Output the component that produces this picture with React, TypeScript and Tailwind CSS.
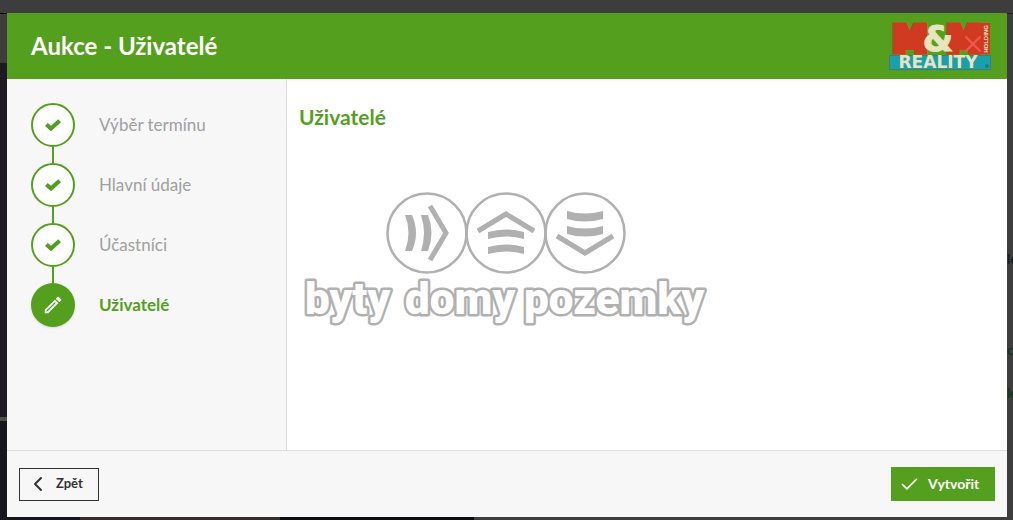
import { Check, ChevronLeft, X } from 'lucide-react';
import { MdOutlineModeEdit } from 'react-icons/md';

const steps = [
  { name: 'Výběr termínu', done: true },
  { name: 'Hlavní údaje', done: true },
  { name: 'Účastníci', done: true },
  { name: 'Uživatelé', done: false },
];

function DoneIcon() {
  return (
    <svg width="18" height="14" viewBox="0 0 18 14" className="shrink-0" aria-hidden="true">
      <path d="M2.4 6.4 L7 10.6 L15.6 2.8" fill="none" stroke="#509e1e" strokeWidth="4" />
    </svg>
  );
}

function Logo() {
  return (
    <svg width="102" height="48" viewBox="0 0 102 48" role="img" aria-label="M&M Reality Holding">
      <rect x="92" y="1" width="9" height="31" fill="#d03a20" />
      <g fontFamily="DejaVu Sans, sans-serif" fontWeight="700" textAnchor="middle">
        <g fontSize="34" fill="#d03a20" stroke="#d03a20" strokeWidth="7">
          <text x="21" y="29">M</text>
          <text x="75" y="29">M</text>
        </g>
        <text x="49" y="29" fontSize="35" fill="#e6e5bd" stroke="#e6e5bd" strokeWidth="1">&amp;</text>
        <text transform="translate(99 17) rotate(-90)" fontFamily="Liberation Sans, sans-serif" fontSize="6" fill="#e6e5bd">HOLDING</text>
        <rect x="0.5" y="33.5" width="101" height="14" fill="#1b9fae" stroke="#4b7c62" />
        <text x="49" y="46" fontSize="17" fill="#e6e5bd">REALITY</text>
      </g>
      <circle cx="98" cy="44" r="2" fill="#14808c" />
    </svg>
  );
}

function Watermark() {
  return (
    <svg width="406" height="138" viewBox="0 0 406 138" role="img" aria-label="byty domy pozemky">
      <g fill="none" stroke="#b0b0b0" strokeWidth="2.5">
        <circle cx="124" cy="42" r="39.5" />
        <circle cx="203" cy="42" r="39.5" />
        <circle cx="282" cy="42" r="39.5" />
      </g>
      <g fill="#b0b0b0">
        <path d="M102 24 H109 Q117 42 109 60 H102 Q109 42 102 24 Z" />
        <path d="M118 24 H125 Q132 42 125 60 H118 Q124 42 118 24 Z" />
        <path d="M185 41 Q203 36 221 41 V48 Q203 43 185 48 Z" />
        <path d="M185 56 Q203 51 221 56 V63 Q203 58 185 63 Z" />
        <path d="M264 20 Q282 25 300 20 V28 Q282 33 264 28 Z" />
        <path d="M264 35 Q282 40 300 35 V43 Q282 48 264 43 Z" />
      </g>
      <g fill="none" stroke="#b0b0b0" strokeWidth="5">
        <path d="M127 15 L143 42 L127 69" />
        <path d="M175 40 L203 23 L231 40" />
        <path d="M254 45 L282 62 L310 45" />
      </g>
      <g
        fontFamily="Roboto, sans-serif"
        fontWeight="900"
        fontSize="44"
        fill="#fff"
        stroke="#b0b0b0"
        strokeWidth="5"
        strokeLinejoin="round"
        paintOrder="stroke"
      >
        <text x="2" y="123">byty</text>
        <text x="102" y="123">domy</text>
        <text x="221" y="123">pozemky</text>
      </g>
    </svg>
  );
}

export default function App() {
  return (
    <div className="flex min-h-screen flex-col bg-[#3d3d3d] font-[Lato,sans-serif]">
      <div className="h-[13px] shrink-0" />
      <div className="flex flex-1">
        {/* Page behind the dialog, left edge */}
        <div className="flex w-[7px] shrink-0 flex-col">
          <div className="h-[50px] border-t border-black" />
          <div className="flex-1 bg-[#1d1a24]" />
          <div className="h-1 bg-[#514e4b]" />
          <div className="h-24 bg-[#17161e]" />
        </div>

        <div role="dialog" aria-labelledby="dialog-title" className="flex min-w-0 flex-1 flex-col bg-white">
          <header className="flex h-[66px] items-center justify-between bg-[#559f1e] pr-4 pl-6">
            <h1 id="dialog-title" className="text-2xl font-bold text-white">Aukce - Uživatelé</h1>
            <div className="relative">
              <Logo />
              <button type="button" aria-label="Zavřít" className="absolute top-2 right-1 text-[#f0564a]">
                <X size={28} strokeWidth={2} />
              </button>
            </div>
          </header>

          <div className="flex flex-1">
            <nav className="w-[280px] shrink-0 border-r border-[#dedede] bg-[#f7f7f7] p-6">
              <ol>
                {steps.map((step, idx) => (
                  <li key={step.name}>
                    {idx > 0 && <div className="ml-[21px] h-4 w-0.5 bg-[#559f1e]" />}
                    <div className="flex items-center gap-6">
                      {step.done ? (
                        <span className="flex size-11 items-center justify-center rounded-full border-2 border-[#559f1e] bg-white">
                          <DoneIcon />
                        </span>
                      ) : (
                        <span className="flex size-11 items-center justify-center rounded-full bg-[#559f1e] text-white shadow-sm">
                          <MdOutlineModeEdit size={22} />
                        </span>
                      )}
                      <a
                        href="#"
                        aria-current={step.done ? undefined : 'step'}
                        className={step.done ? 'text-[17px] text-[#a0a0a0]' : 'text-[17px] font-bold text-[#559f1e]'}
                      >
                        {step.name}
                      </a>
                    </div>
                  </li>
                ))}
              </ol>
            </nav>

            <main className="flex-1 px-3 py-6">
              <h2 className="text-[21px] leading-7 font-bold text-[#559f1e]">Uživatelé</h2>
              <div className="mt-[60px] ml-1">
                <Watermark />
              </div>
            </main>
          </div>

          <footer className="flex h-[67px] items-center justify-between border-t border-[#dedede] bg-[#f7f7f7] px-3">
            <button type="button" className="flex h-[33px] w-20 items-center gap-1.5 border border-[#333] px-1.5 text-[13px] font-bold text-[#333]">
              <ChevronLeft size={24} />
              Zpět
            </button>
            <button type="button" className="flex h-[34px] w-[104px] items-center gap-2 bg-[#559f1e] px-2 text-sm font-bold text-white">
              <Check size={21} />
              Vytvořit
            </button>
          </footer>
        </div>

        {/* Page behind the dialog, right edge */}
        <div className="flex w-1.5 shrink-0 flex-col overflow-hidden border-t border-[#222] text-[13px] leading-4 font-bold">
          <span className="mt-[237px] text-[#1c1c1c]">le</span>
          <span className="mt-[75px] text-[#17351a]">ce</span>
          <span className="mt-[27px] text-[#17351a]">k</span>
        </div>
      </div>
      <div className="flex h-[3px] shrink-0">
        <div className="w-20 bg-[#17161e]" />
        <div className="w-[200px] bg-[#332c28]" />
        <div className="w-[194px] bg-[#0c0c12]" />
      </div>
    </div>
  );
}
